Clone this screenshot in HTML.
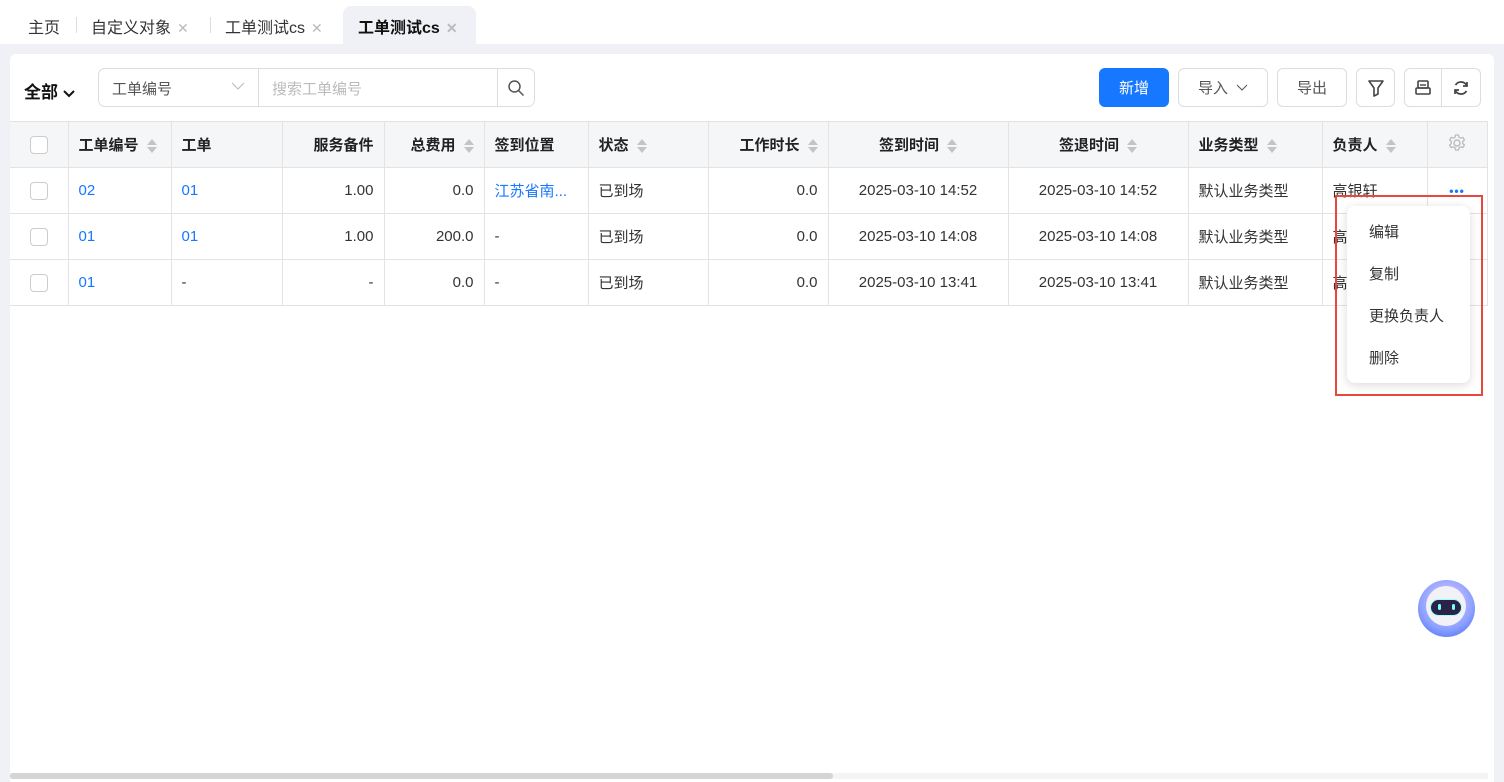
<!DOCTYPE html>
<html><head><meta charset="utf-8"><style>
*{box-sizing:border-box;margin:0;padding:0}
body{width:1504px;height:782px;overflow:hidden;background:#f0f1f6;font-family:"Liberation Sans","Noto Sans CJK SC",sans-serif;font-size:14px;color:#333;position:relative}
.tabs{position:absolute;left:0;top:0;width:1504px;height:44px;background:#fff}
.tab{position:absolute;top:14px;font-size:16px;color:#333}
.x{color:#bbb;font-size:14px;margin-left:6px}
.sep{position:absolute;top:17px;width:1px;height:16px;background:#ddd}
.act{position:absolute;left:343px;top:6px;width:133px;height:38px;background:#f0f1f6;border-radius:8px 8px 0 0}
.panel{position:absolute;left:10px;top:54px;width:1484px;height:728px;background:#fff;border-radius:6px 6px 0 0}
.abs{position:absolute}
.btn{position:absolute;top:68px;height:39px;border:1px solid #ddd;border-radius:6px;background:#fff;display:flex;align-items:center;justify-content:center;color:#555;font-size:15px}
table{position:absolute;left:10px;top:121px;border-collapse:collapse;table-layout:fixed;border-top:1px solid #e3e3e3}
td,th{height:46px;border-bottom:1px solid #e3e3e3;border-right:1px solid #e3e3e3;padding:0 10px;font-size:15px;white-space:nowrap;overflow:hidden}
th{height:46px;background:#f5f6f8;font-weight:bold;color:#222;text-align:left}
.r{text-align:right}.c{text-align:center}
.blue{color:#1677ff}
.sort{display:inline-block;width:10px;height:16px;vertical-align:middle;margin-left:8px;position:relative}
.sort:before{content:"";position:absolute;left:0;top:1px;border:5px solid transparent;border-bottom:6px solid #c4c4c4;border-top:0}
.sort:after{content:"";position:absolute;left:0;top:9px;border:5px solid transparent;border-top:6px solid #c4c4c4;border-bottom:0}
.cb{display:inline-block;width:18px;height:18px;border:1px solid #ccc;border-radius:4px;vertical-align:middle;background:#fff}
</style></head><body>
<div class="tabs">
<div class="act"></div>
<div class="tab" style="left:28px">主页</div>
<div class="sep" style="left:76px"></div>
<div class="tab" style="left:91px">自定义对象<span class="x">✕</span></div>
<div class="sep" style="left:210px"></div>
<div class="tab" style="left:225px">工单测试cs<span class="x">✕</span></div>
<div class="tab" style="left:358px;font-weight:bold;color:#111">工单测试cs<span class="x">✕</span></div>
</div>
<div class="panel"></div>
<div class="abs" style="left:24px;top:78px;font-size:17px;font-weight:bold;color:#111">全部 <svg width="12" height="9" viewBox="0 0 12 9"><path d="M1 2l5 5 5-5" stroke="#111" stroke-width="2" fill="none"/></svg></div>
<div class="abs" style="left:98px;top:68px;width:437px;height:39px;border:1px solid #ddd;border-radius:7px"></div>
<div class="abs" style="left:258px;top:68px;width:1px;height:39px;background:#ddd"></div>
<div class="abs" style="left:497px;top:68px;width:1px;height:39px;background:#ddd"></div>
<div class="abs" style="left:112px;top:78px;font-size:15px;color:#555">工单编号</div>
<svg class="abs" style="left:231px;top:82px" width="14" height="9"><path d="M1 1l6 6 6-6" stroke="#bbb" fill="none"/></svg>
<div class="abs" style="left:272px;top:78px;font-size:15px;color:#bbb">搜索工单编号</div>
<svg class="abs" style="left:507px;top:79px" width="18" height="18"><circle cx="7.5" cy="7.5" r="5.5" stroke="#555" stroke-width="1.5" fill="none"/><path d="M11.5 11.5l5 5" stroke="#555" stroke-width="1.5"/></svg>
<div class="btn" style="left:1099px;width:70px;background:#1677ff;border-color:#1677ff;color:#fff">新增</div>
<div class="btn" style="left:1178px;width:90px">导入 <svg style="margin-left:8px" width="12" height="8"><path d="M1 1l5 5 5-5" stroke="#555" fill="none"/></svg></div>
<div class="btn" style="left:1277px;width:70px">导出</div>
<div class="btn" style="left:1356px;width:39px"><svg width="18" height="18"><path d="M2 2h14l-5 7v6l-4 2V9z" stroke="#444" stroke-width="1.6" fill="none" stroke-linejoin="round"/></svg></div>
<div class="btn" style="left:1404px;width:77px;justify-content:flex-start"><div style="width:37px;height:37px;border-right:1px solid #ddd;display:flex;align-items:center;justify-content:center"><svg width="18" height="18"><rect x="4" y="2" width="10" height="7" rx="1" stroke="#444" stroke-width="1.6" fill="none"/><rect x="2" y="9" width="14" height="6" rx="1" stroke="#444" stroke-width="1.6" fill="none"/><path d="M6 6h6" stroke="#444" stroke-width="1.4"/></svg></div><div style="width:38px;display:flex;justify-content:center"><svg width="18" height="18"><path d="M15 7A6.5 6.5 0 0 0 3.5 6M3 11a6.5 6.5 0 0 0 11.5 1" stroke="#444" stroke-width="1.7" fill="none"/><path d="M15 3v4h-4M3 15v-4h4" stroke="#444" stroke-width="1.7" fill="none"/></svg></div></div>
<table>
<colgroup><col style="width:58px"><col style="width:103px"><col style="width:111px"><col style="width:102px"><col style="width:100px"><col style="width:104px"><col style="width:120px"><col style="width:120px"><col style="width:180px"><col style="width:180px"><col style="width:134px"><col style="width:105px"><col style="width:60px"></colgroup>
<tr><th class="c"><span class="cb"></span></th><th>工单编号<span class="sort"></span></th><th>工单</th><th class="r">服务备件</th><th class="r">总费用<span class="sort"></span></th><th>签到位置</th><th>状态<span class="sort"></span></th><th class="r">工作时长<span class="sort"></span></th><th class="c">签到时间<span class="sort"></span></th><th class="c">签退时间<span class="sort"></span></th><th>业务类型<span class="sort"></span></th><th>负责人<span class="sort"></span></th><th class="c" style="box-shadow:-4px 0 6px rgba(0,0,0,.05)"><svg width="20" height="20" viewBox="0 0 20 20"><circle cx="10" cy="10" r="3" stroke="#bbb" stroke-width="1.4" fill="none"/><path d="M8.5 2h3l.5 2.2 1.8 1 2.1-.8 1.5 2.6-1.7 1.5v2l1.7 1.5-1.5 2.6-2.1-.8-1.8 1-.5 2.2h-3l-.5-2.2-1.8-1-2.1.8-1.5-2.6 1.7-1.5v-2L2.6 7l1.5-2.6 2.1.8 1.8-1z" stroke="#bbb" stroke-width="1.3" fill="none" stroke-linejoin="round"/></svg></th></tr>
<tr><td class="c"><span class="cb"></span></td><td class="blue">02</td><td class="blue">01</td><td class="r">1.00</td><td class="r">0.0</td><td class="blue">江苏省南...</td><td>已到场</td><td class="r">0.0</td><td class="c">2025-03-10 14:52</td><td class="c">2025-03-10 14:52</td><td>默认业务类型</td><td>高银轩</td><td class="c blue" style="font-size:12px;font-weight:bold;letter-spacing:1px">•••</td></tr>
<tr><td class="c"><span class="cb"></span></td><td class="blue">01</td><td class="blue">01</td><td class="r">1.00</td><td class="r">200.0</td><td>-</td><td>已到场</td><td class="r">0.0</td><td class="c">2025-03-10 14:08</td><td class="c">2025-03-10 14:08</td><td>默认业务类型</td><td>高</td><td></td></tr>
<tr><td class="c"><span class="cb"></span></td><td class="blue">01</td><td>-</td><td class="r">-</td><td class="r">0.0</td><td>-</td><td>已到场</td><td class="r">0.0</td><td class="c">2025-03-10 13:41</td><td class="c">2025-03-10 13:41</td><td>默认业务类型</td><td>高</td><td></td></tr>
</table>
<div class="abs" style="left:1347px;top:206px;width:123px;height:177px;background:#fff;border-radius:8px;box-shadow:0 2px 10px rgba(0,0,0,.15)">
<div class="abs" style="left:22px;top:15px;font-size:15px">编辑</div>
<div class="abs" style="left:22px;top:57px;font-size:15px">复制</div>
<div class="abs" style="left:22px;top:99px;font-size:15px">更换负责人</div>
<div class="abs" style="left:22px;top:141px;font-size:15px">删除</div>
</div>
<div class="abs" style="left:1335px;top:195px;width:148px;height:201px;border:2px solid #e8473b"></div>
<div class="abs" style="left:1418px;top:580px;width:57px;height:57px;border-radius:50%;background:radial-gradient(circle at 50% 40%,#f5d0ff 0,#8aa0ff 60%,#3f5ef7 100%)"></div>
<div class="abs" style="left:1426px;top:586px;width:40px;height:40px;border-radius:50%;background:#f2f2f6"></div>
<div class="abs" style="left:1430px;top:599px;width:32px;height:17px;border-radius:9px;background:#2a2345;border:1px solid #9ff"></div>
<div class="abs" style="left:1438px;top:604px;width:3px;height:6px;background:#7ff;border-radius:2px"></div>
<div class="abs" style="left:1452px;top:604px;width:3px;height:6px;background:#7ff;border-radius:2px"></div>
<div class="abs" style="left:10px;top:773px;width:1478px;height:6px;background:#f4f4f4"></div>
<div class="abs" style="left:10px;top:773px;width:823px;height:6px;background:#d5d5d5;border-radius:3px"></div>
</body></html>
